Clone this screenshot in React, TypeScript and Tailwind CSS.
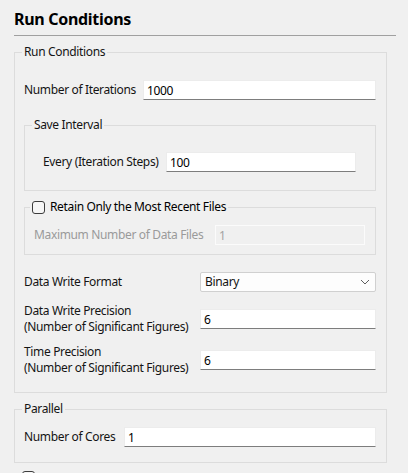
import { ReactNode } from "react";

function TextInput({ value, disabled }: { value: string; disabled?: boolean }) {
  return (
    <input
      type="text"
      defaultValue={value}
      disabled={disabled}
      className={
        disabled
          ? "h-[20px] w-0 min-w-0 flex-1 border border-[#fbfbfb] bg-transparent px-[3px] text-[12px] text-[#a3a3a3] outline-none"
          : "h-[20px] w-0 min-w-0 flex-1 border border-[#ececec] border-b-[#7d7d7d] bg-white px-[3px] text-[12px] text-black outline-none"
      }
    />
  );
}

function Row({ label, width, children }: { label: ReactNode; width: string; children: ReactNode }) {
  return (
    <div className="flex items-center">
      <span className={`${width} shrink-0 whitespace-nowrap`}>{label}</span>
      {children}
    </div>
  );
}

function CheckBox() {
  return (
    <input
      type="checkbox"
      className="h-[13px] w-[13px] shrink-0 appearance-none rounded-[3px] border border-[#3c3c3c] bg-[#f6f6f6]"
    />
  );
}

export default function App() {
  return (
    <div className="min-h-screen bg-[#f0f0f0] pl-[14px] pr-[12px] font-['Noto_Sans',sans-serif] text-[12px] leading-[16px] tracking-[-0.35px] text-[#141414]">
      <h1 className="border-b border-[#a0a0a0] pt-[8px] pb-[5px] text-[16px] font-bold leading-[22px] tracking-[-0.3px] text-black">
        Run Conditions
      </h1>

      <div className="mr-[9px]">
        {/* main group */}
        <fieldset className="mt-[8px] min-w-0 border border-[#dcdcdc] pl-[7px] pr-[10px] pb-[16px]">
          <legend className="px-[2px] leading-[16px]">Run Conditions</legend>
          <div className="pl-[2px]">
            <div className="mt-[20px]">
              <Row label="Number of Iterations" width="w-[119px]">
                <TextInput value="1000" />
              </Row>
            </div>

            <fieldset className="mt-[17px] min-w-0 border border-[#dcdcdc] pl-[7px] pr-[19px] pb-[18px]">
              <legend className="px-[2px] leading-[16px]">Save Interval</legend>
              <div className="pl-[11px] pt-[19px]">
                <Row label="Every (Iteration Steps)" width="w-[123px]">
                  <TextInput value="100" />
                </Row>
              </div>
            </fieldset>

            <fieldset className="mt-[8px] min-w-0 border border-[#dcdcdc] pl-[5px] pr-[10px] pb-[9px]">
              <legend className="px-[2px]">
                <label className="flex h-[16px] items-center gap-[5px] text-black">
                  <CheckBox />
                  Retain Only the Most Recent Files
                </label>
              </legend>
              <div className="pl-[4px] pt-[10px]">
                <Row label={<span className="text-[#9a9a9a]">Maximum Number of Data Files</span>} width="w-[181px]">
                  <TextInput value="1" disabled />
                </Row>
              </div>
            </fieldset>

            <div className="mt-[17px]">
              <Row label="Data Write Format" width="w-[176px]">
                <button className="flex h-[20px] w-0 min-w-0 flex-1 items-center justify-between rounded-[2px] border border-[#d0d0d0] bg-[#fdfdfd] pl-[4px] pr-[4px] text-left">
                  <span>Binary</span>
                  <svg width="10" height="6" viewBox="0 0 10 6" className="mr-[1px]">
                    <path d="M1 1 L5 5 L9 1" fill="none" stroke="#5f5f5f" strokeWidth="1" />
                  </svg>
                </button>
              </Row>
            </div>

            <div className="mt-[11px]">
              <Row
                label={
                  <>
                    Data Write Precision
                    <br />
                    (Number of Significant Figures)
                  </>
                }
                width="w-[176px]"
              >
                <TextInput value="6" />
              </Row>
            </div>

            <div className="mt-[9px]">
              <Row
                label={
                  <>
                    Time Precision
                    <br />
                    (Number of Significant Figures)
                  </>
                }
                width="w-[176px]"
              >
                <TextInput value="6" />
              </Row>
            </div>
          </div>
        </fieldset>

        {/* parallel group */}
        <fieldset className="mt-[8px] min-w-0 border border-[#dcdcdc] pl-[7px] pr-[10px] pb-[15px]">
          <legend className="px-[2px] leading-[16px]">Parallel</legend>
          <div className="pl-[2px] pt-[10px]">
            <Row label="Number of Cores" width="w-[100px]">
              <TextInput value="1" />
            </Row>
          </div>
        </fieldset>
      </div>

      <div className="mt-[8px] flex pl-[8px] pb-[10px]">
        <CheckBox />
      </div>
    </div>
  );
}
